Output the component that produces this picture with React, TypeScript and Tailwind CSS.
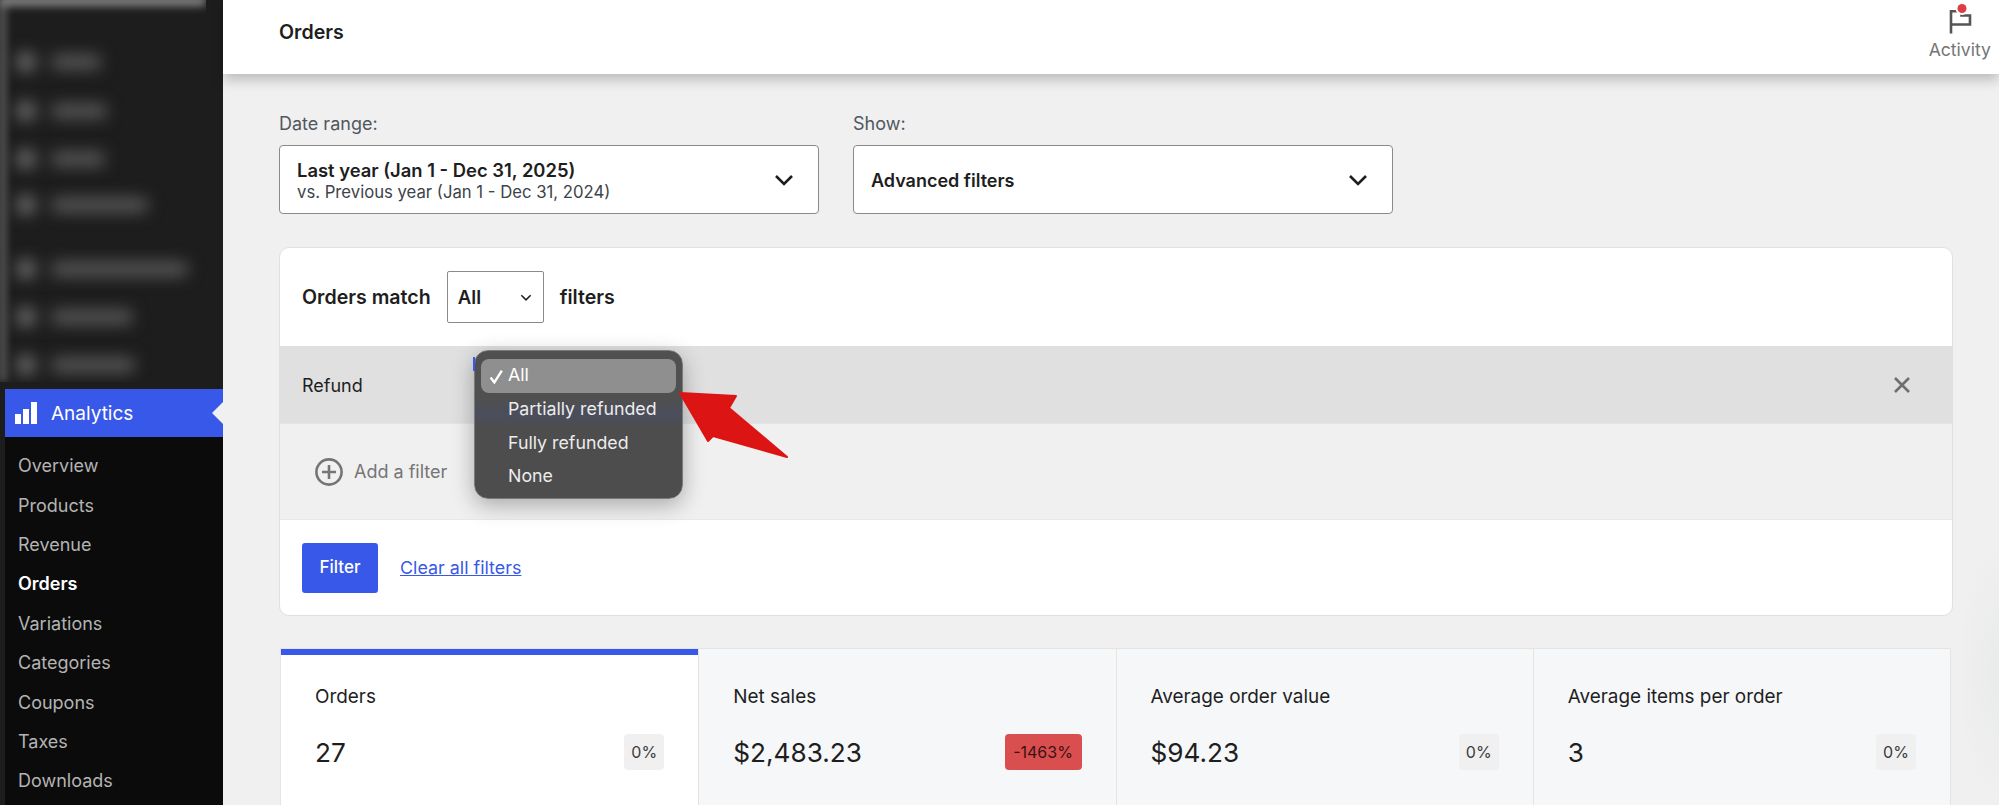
import React from 'react';

const font = { fontFamily: 'Inter, "Liberation Sans", sans-serif' };

const blurred = [
  { w: 48, mt: 55 },
  { w: 54, mt: 35 },
  { w: 52, mt: 34 },
  { w: 95, mt: 32 },
  { w: 135, mt: 50 },
  { w: 80, mt: 34 },
  { w: 82, mt: 34 },
];

const subMenu = ['Overview', 'Products', 'Revenue', 'Orders', 'Variations', 'Categories', 'Coupons', 'Taxes', 'Downloads'];

const stats = [
  { label: 'Orders', value: '27', badge: '0%', active: true },
  { label: 'Net sales', value: '$2,483.23', badge: '-1463%', red: true },
  { label: 'Average order value', value: '$94.23', badge: '0%' },
  { label: 'Average items per order', value: '3', badge: '0%' },
];

function Chevron({ className }: { className?: string }) {
  return (
    <svg viewBox="0 0 20 12" className={className} fill="none" stroke="currentColor" strokeWidth="2.6">
      <path d="M2 2l8 8 8-8" />
    </svg>
  );
}

function Sidebar() {
  return (
    <aside className="w-[223px] shrink-0 bg-[#1d1d1d] flex flex-col h-full overflow-hidden">
      <div className="h-[382px] shrink-0 relative overflow-hidden">
        <div className="absolute left-0 top-0 w-[5px] h-full bg-[#777] blur-[4px]" />
        <div className="absolute left-0 top-0 w-[206px] h-[17px] overflow-hidden">
          <div className="w-full h-[8px] mt-[-3px] bg-[#a0a0a0] blur-[5px]" />
        </div>
        <div className="flex flex-col pl-[16px]">
          {blurred.map((r, i) => (
            <div key={i} className="flex items-center gap-[16px] h-[14px] blur-[8px]" style={{ marginTop: r.mt }}>
              <div className="w-[20px] h-[20px] rounded-full bg-[#6e6e6e]" />
              <div className="h-[14px] bg-[#5a5a5a]" style={{ width: r.w }} />
            </div>
          ))}
        </div>
      </div>
      <div className="pl-[5px] pt-[7px] flex-1 flex flex-col">
        <div className="bg-[#3858e9] h-[48px] flex items-center relative text-white text-[19px] pl-[10px] gap-[14px]">
          <svg viewBox="0 0 22 22" className="w-[22px] h-[22px]" fill="#fff">
            <rect x="0" y="12" width="6" height="10" />
            <rect x="8" y="7" width="6" height="15" />
            <rect x="16" y="0" width="6" height="22" />
          </svg>
          <span className="mt-[2px]">Analytics</span>
          <div className="absolute right-0 top-[13px] w-0 h-0 border-y-[11px] border-y-transparent border-r-[11px] border-r-[#f0f0f0]" />
        </div>
        <nav className="bg-[#0b0b0b] flex-1 pt-[9px] pl-[13px] flex flex-col">
          {subMenu.map((m) => (
            <div key={m} className={`h-[39.4px] flex items-center text-[18px] ${m === 'Orders' ? 'text-white font-semibold' : 'text-[#b4b4b4]'}`}>
              {m}
            </div>
          ))}
        </nav>
      </div>
    </aside>
  );
}

function Header() {
  return (
    <header className="h-[74px] shrink-0 bg-white shadow-[0_6px_12px_rgba(0,0,0,0.22)] flex justify-between pl-[56px] pr-[8px] relative z-10">
      <h1 className="text-[19.6px] font-semibold text-[#1e1e1e] mt-[18px]">Orders</h1>
      <div className="flex flex-col items-center pt-[4px]">
        <svg viewBox="1948 4 24 30" className="w-[24px] h-[30px]" fill="none">
          <path d="M1951 33.5V11.2H1961.5V15.5H1970V24.5H1951" stroke="#555" strokeWidth="2.6" />
          <circle cx="1962" cy="8.5" r="6.5" fill="#fff" />
          <circle cx="1962" cy="8.5" r="4.5" fill="#dc3f41" />
        </svg>
        <span className="text-[17.6px] text-[#757575] leading-[20px] mt-[6px]">Activity</span>
      </div>
    </header>
  );
}

function Selects() {
  return (
    <div className="flex gap-[34px]">
      <div className="w-[540px]">
        <div className="text-[18px] text-[#50575e] leading-[22px] pt-[1px] mb-[10px] h-[22px] box-content">Date range:</div>
        <div className="h-[69px] bg-white border border-[#8a8a8a] rounded-[4px] flex items-center justify-between pl-[17px] pr-[24px]">
          <div className="pt-[2px]">
            <div className="text-[18.4px] font-semibold text-[#1e1e1e] leading-[23px]">Last year (Jan 1 - Dec 31, 2025)</div>
            <div className="text-[16.7px] text-[#3c434a] leading-[21px]">vs. Previous year (Jan 1 - Dec 31, 2024)</div>
          </div>
          <Chevron className="w-[20px] h-[12px] text-[#1e1e1e]" />
        </div>
      </div>
      <div className="w-[540px]">
        <div className="text-[18px] text-[#50575e] leading-[22px] pt-[1px] mb-[10px] h-[22px] box-content">Show:</div>
        <div className="h-[69px] bg-white border border-[#8a8a8a] rounded-[4px] flex items-center justify-between pl-[17px] pr-[24px]">
          <div className="text-[18px] font-semibold text-[#1e1e1e] pt-[2px]">Advanced filters</div>
          <Chevron className="w-[20px] h-[12px] text-[#1e1e1e]" />
        </div>
      </div>
    </div>
  );
}

function FilterCard() {
  return (
    <section className="mt-[33px] w-[1674px] bg-white border border-[#e0e0e0] rounded-[10px] overflow-hidden">
      <div className="h-[98px] flex items-center pl-[22px] gap-[16px] text-[19.6px] font-semibold text-[#1e1e1e]">
        <span className="mt-[2px]">Orders match</span>
        <div className="w-[97px] h-[52px] border border-[#8a8a8a] rounded-[2px] flex items-center justify-between pl-[10px] pr-[11px] text-[18.6px]">
          <span className="mt-[1px]">All</span>
          <Chevron className="w-[12px] h-[7px] text-[#1e1e1e]" />
        </div>
        <span className="mt-[2px]">filters</span>
      </div>
      <div className="h-[77px] bg-[#e0e0e0] flex items-center justify-between pl-[22px] pr-[41px] text-[18px] text-[#1e1e1e]">
        <span className="mt-[2px]">Refund</span>
        <svg viewBox="0 0 18 18" className="w-[18px] h-[18px]" fill="none" stroke="#6e6e6e" strokeWidth="2.6">
          <path d="M2 2l14 14M16 2L2 16" />
        </svg>
      </div>
      <div className="h-[96px] bg-[#f0f0f0] border-t border-[#e4e4e4] flex items-center pl-[35px] gap-[11px] text-[18px] text-[#757575]">
        <svg viewBox="0 0 28 28" className="w-[28px] h-[28px]" fill="none" stroke="#757575" strokeWidth="2.6">
          <circle cx="14" cy="14" r="12.6" />
          <path d="M14 7v14M7 14h14" />
        </svg>
        <span>Add a filter</span>
      </div>
      <div className="h-[96px] border-t border-[#e8e8e8] flex items-center pl-[22px] gap-[22px]">
        <button className="w-[76px] h-[50px] bg-[#3858e9] rounded-[3px] text-white text-[17px] font-medium pt-[1px]">Filter</button>
        <a className="text-[17.9px] text-[#3858e9] underline mt-[1px]">Clear all filters</a>
      </div>
    </section>
  );
}

function Stats() {
  return (
    <section className="mt-[32px] ml-[1px] w-[1671px] grid grid-cols-4 border border-[#e4e4e4] border-b-0 flex-1">
      {stats.map((s, i) => (
        <div
          key={s.label}
          className={`${i > 0 ? 'border-l border-[#e4e4e4]' : ''} ${s.active ? 'bg-white border-t-[6px] border-t-[#3858e9] pt-[31px]' : 'bg-[#f6f7f9] pt-[37px]'} pl-[34px] pr-[34px] text-[#1e1e1e]`}
        >
          <div className="text-[18.9px] leading-[22px]">{s.label}</div>
          <div className="flex items-center justify-between mt-[25px]">
            <span className="text-[26.2px] leading-[36px] mt-[2px]">{s.value}</span>
            <span
              className={`h-[36px] rounded-[4px] flex items-center justify-center text-[16px] ${s.red ? 'w-[77px] bg-[#d94f4f] text-[#3a1212]' : 'w-[40px] bg-[#f0f0f0] text-[#3c3c3c]'}`}
            >
              {s.badge}
            </span>
          </div>
        </div>
      ))}
    </section>
  );
}

function Dropdown() {
  const items = ['All', 'Partially refunded', 'Fully refunded', 'None'];
  return (
    <div className="absolute left-[474px] top-[350px] w-[209px] h-[149px] z-20 rounded-[14px] border border-[#7a7a7a] bg-[linear-gradient(180deg,#505050_0%,#505050_32%,#4a4d5c_44%,#4d4d4d_52%,#4d4d4d_100%)] shadow-[0_6px_22px_rgba(0,0,0,0.3)] pt-[8px] px-[6px] text-[17.8px] text-[#ececec]">
      <div className="absolute left-[-2px] top-[6px] w-[2px] h-[14px] bg-[#3858e9]" />
      {items.map((t, i) => (
        <div key={t} className={`h-[33.6px] flex items-center pl-[27px] relative rounded-[8px] ${i === 0 ? 'bg-[#8f8f90] text-white' : ''}`}>
          {i === 0 && (
            <svg viewBox="0 0 14 14" className="absolute left-[8px] top-[10px] w-[15px] h-[15px]" fill="none" stroke="#fff" strokeWidth="2.2">
              <path d="M1.5 8l3.5 4.5L12 1.5" />
            </svg>
          )}
          {t}
        </div>
      ))}
    </div>
  );
}

function RedArrow() {
  return (
    <svg className="absolute left-[670px] top-[385px] z-30" width="125" height="80" viewBox="670 385 125 80">
      <polygon
        points="680,393 736,396 729,408 787,457 713,436 708,441"
        fill="#dd1414"
        stroke="#dd1414"
        strokeWidth="2"
        strokeLinejoin="round"
      />
    </svg>
  );
}

export default function App() {
  return (
    <div className="relative w-[1999px] h-[805px] flex overflow-hidden bg-[#f0f0f0]" style={font}>
      <Sidebar />
      <main className="flex-1 min-w-0 flex flex-col">
        <Header />
        <div className="flex-1 min-h-0 flex flex-col pl-[56px] pt-[38px]">
          <Selects />
          <FilterCard />
          <Stats />
        </div>
      </main>
      <Dropdown />
      <RedArrow />
      <div className="absolute right-0 top-[540px] w-[44px] h-[265px] bg-[radial-gradient(ellipse_at_right,#e9eaea_0%,#f0f0f0_70%)]" />
    </div>
  );
}
